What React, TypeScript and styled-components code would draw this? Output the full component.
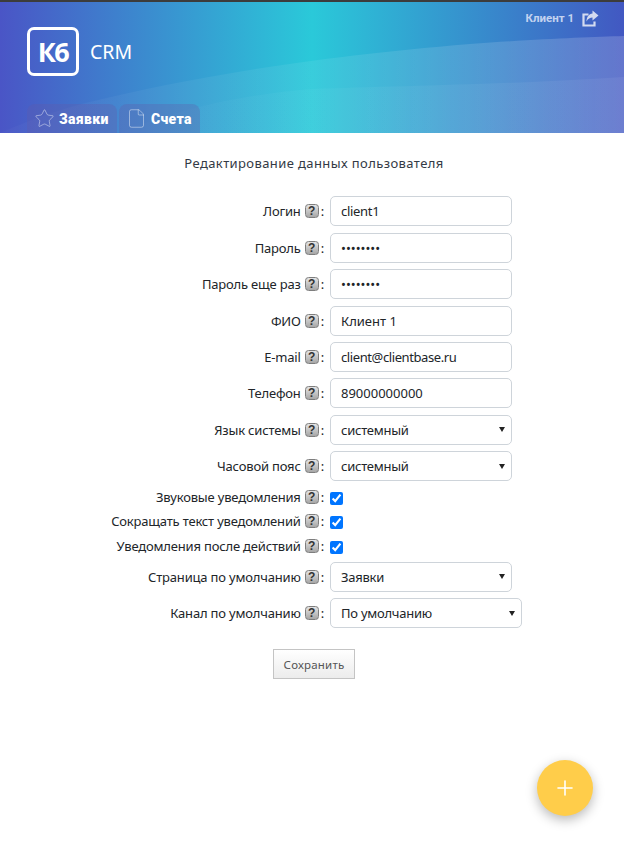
import React from 'react'
import styled, { createGlobalStyle } from 'styled-components'
import { Star, File, Plus } from 'lucide-react'

const GlobalStyle = createGlobalStyle`
  html, body {
    margin: 0;
    padding: 0;
    background: #fff;
    font-family: "Noto Sans", "Open Sans", sans-serif;
    font-size: 13px;
    color: #212529;
  }
`

const Page = styled.div`
  min-height: 866px;
`

const Header = styled.header`
  position: relative;
  height: 131px;
  border-top: 2px solid #3c3c3c;
  overflow: hidden;
  background: linear-gradient(90deg, #4a55c6 0%, #2ac9d9 50%, #4258c2 100%);
`

const Waves = styled.svg`
  position: absolute;
  inset: 0;
  width: 100%;
  height: 100%;
`

const HeaderInner = styled.div`
  position: relative;
  height: 100%;
  display: flex;
  flex-direction: column;
`

const UserBar = styled.div`
  display: flex;
  justify-content: flex-end;
  align-items: center;
  gap: 8px;
  padding: 7px 25px 0 0;
  height: 18px;
  color: #c3d3f0;
  font-family: "Roboto", sans-serif;
  font-size: 11.5px;
  font-weight: 700;
`

const Brand = styled.div`
  display: flex;
  align-items: center;
  gap: 11px;
  margin: 0 0 0 27px;
`

const LogoBox = styled.div`
  width: 46px;
  height: 43px;
  border: 3px solid #fff;
  border-radius: 7px;
  display: flex;
  align-items: center;
  justify-content: center;
  color: #fff;
  font-family: "Open Sans", sans-serif;
  font-size: 27px;
  font-weight: 700;
  letter-spacing: -1.5px;
`

const BrandName = styled.div`
  color: #fff;
  font-size: 19.5px;
`

const Tabs = styled.nav`
  margin-top: auto;
  display: flex;
  gap: 2px;
  padding-left: 27px;
`

const Tab = styled.div<{ $width: number }>`
  width: ${(p) => p.$width}px;
  height: 29px;
  box-sizing: border-box;
  display: flex;
  align-items: center;
  gap: 4px;
  padding-left: 7px;
  border-radius: 8px 8px 0 0;
  background: rgba(100, 90, 170, 0.3);
  color: #fff;
  font-family: "Roboto", sans-serif;
  font-size: 14px;
  font-weight: 900;
  letter-spacing: 0.3px;
  svg {
    color: rgba(255, 255, 255, 0.45);
    flex: none;
  }
`

const Title = styled.h1`
  margin: 21px 0 0;
  padding-left: 4px;
  text-align: center;
  font-size: 13px;
  font-weight: 400;
  line-height: 18px;
  letter-spacing: 0.4px;
  color: #333a45;
`

const Form = styled.form`
  margin-top: 24.4px;
  display: grid;
  grid-template-columns: 325px 1fr;
  column-gap: 5px;
  row-gap: 6.4px;
  align-items: center;
`

const Label = styled.label`
  display: flex;
  justify-content: flex-end;
  align-items: center;
  padding-right: 1px;
  white-space: nowrap;
  letter-spacing: -0.18px;
`

const Help = styled.span`
  flex: none;
  width: 12px;
  height: 12px;
  margin: 0 2px 0 4px;
  border: 1px solid #7e7e7e;
  border-radius: 3.5px;
  background: linear-gradient(#e4e4e4, #a6a6a6);
  color: #333;
  font-family: "Liberation Sans", sans-serif;
  font-size: 12px;
  font-weight: 700;
  line-height: 12px;
  letter-spacing: 0;
  text-align: center;
`

const Field = styled.div<{ $wide?: boolean }>`
  position: relative;
  width: ${(p) => (p.$wide ? 192 : 182)}px;
`

const TextInput = styled.input<{ $tracking?: number }>`
  width: 100%;
  height: 30px;
  box-sizing: border-box;
  padding: 0 10px;
  border: 1px solid #ced4da;
  border-radius: 5px;
  background: #fff;
  color: #212529;
  font: inherit;
  letter-spacing: ${(p) => p.$tracking ?? 0}px;
  outline: none;
`

const Select = styled.select`
  display: block;
  width: 100%;
  height: 30px;
  box-sizing: border-box;
  padding: 0 10px;
  appearance: none;
  border: 1px solid #ced4da;
  border-radius: 5px;
  background: #fff;
  color: #212529;
  font: inherit;
  letter-spacing: -0.25px;
  outline: none;
`

const SelectField = styled(Field)`
  &::after {
    content: '';
    position: absolute;
    top: 12.5px;
    right: 7px;
    border-style: solid;
    border-width: 5px 3px 0;
    border-color: #222 transparent transparent;
    pointer-events: none;
  }
`

const CheckField = styled.div`
  height: 18.4px;
  display: flex;
  align-items: center;
`

const Check = styled.input`
  margin: 3px 0 0;
`

const Actions = styled.div`
  margin-top: 21px;
  display: flex;
  justify-content: center;
  padding-left: 4px;
`

const SaveButton = styled.button`
  width: 82px;
  height: 30px;
  border: 1px solid #c4c4c4;
  background: linear-gradient(#fff, #ececec);
  color: #555;
  font: inherit;
  font-size: 11.5px;
  letter-spacing: 0.2px;
  padding: 0;
`

const Fab = styled.button`
  position: fixed;
  left: 537px;
  top: 760px;
  width: 56px;
  height: 56px;
  border: none;
  border-radius: 50%;
  background: #ffcd4a;
  color: #fff;
  display: flex;
  align-items: center;
  justify-content: center;
  padding: 0;
  box-shadow: 0 4px 12px rgba(0, 0, 0, 0.28);
`

const rows = [
  { label: 'Логин', type: 'text', value: 'client1', tracking: -0.3 },
  { label: 'Пароль', type: 'password', value: '12345678' },
  { label: 'Пароль еще раз', type: 'password', value: '12345678' },
  { label: 'ФИО', type: 'text', value: 'Клиент 1' },
  { label: 'E-mail', type: 'text', value: 'client@clientbase.ru', tracking: -0.4 },
  { label: 'Телефон', type: 'text', value: '89000000000' },
]

const FieldLabel: React.FC<{ text: string }> = ({ text }) => (
  <Label>
    {text}
    <Help>?</Help>:
  </Label>
)

const ShareIcon = () => (
  <svg width="17" height="17" viewBox="0 0 17 17" fill="none">
    <path d="M6.5 4.5H1.5v11h11v-4" stroke="#d3dbf0" strokeWidth="2.2" />
    <path
      d="M10.5 0.5L16.5 5.5L10.5 10.5V7.5C8 7.5 6 8.5 4.5 11.5C4.5 7 7 4 10.5 3.5Z"
      fill="#d3dbf0"
    />
  </svg>
)

const App: React.FC = () => {
  return (
    <Page>
      <GlobalStyle />
      <Header>
        <Waves viewBox="0 0 624 131" preserveAspectRatio="none">
          <defs>
            <linearGradient id="waveTop" x1="0" x2="1" y1="0" y2="0">
              <stop offset="0" stopColor="#fff" stopOpacity="0.02" />
              <stop offset="0.5" stopColor="#fff" stopOpacity="0.07" />
              <stop offset="1" stopColor="#fff" stopOpacity="0.18" />
            </linearGradient>
            <linearGradient id="waveBottom" x1="0" x2="1" y1="0" y2="0">
              <stop offset="0" stopColor="#fff" stopOpacity="0.01" />
              <stop offset="0.5" stopColor="#fff" stopOpacity="0.04" />
              <stop offset="1" stopColor="#fff" stopOpacity="0.06" />
            </linearGradient>
          </defs>
          <path
            d="M0 131 C 30 118, 60 107, 90 100 C 180 78, 300 56, 470 42 C 540 37, 590 35, 624 34 L624 131 Z"
            fill="url(#waveTop)"
          />
          <path
            d="M120 131 C 180 105, 250 92, 312 87 C 400 84, 520 82, 624 75 L624 131 Z"
            fill="url(#waveBottom)"
          />
        </Waves>
        <HeaderInner>
          <UserBar>
            Клиент 1
            <ShareIcon />
          </UserBar>
          <Brand>
            <LogoBox>К6</LogoBox>
            <BrandName>CRM</BrandName>
          </Brand>
          <Tabs>
            <Tab $width={90}>
              <Star size={21} strokeWidth={1.1} />
              Заявки
            </Tab>
            <Tab $width={81}>
              <File size={21} strokeWidth={1.1} />
              Счета
            </Tab>
          </Tabs>
        </HeaderInner>
      </Header>

      <Title>Редактирование данных пользователя</Title>

      <Form>
        {rows.map((row) => (
          <React.Fragment key={row.label}>
            <FieldLabel text={row.label} />
            <Field>
              <TextInput type={row.type} defaultValue={row.value} $tracking={row.tracking} />
            </Field>
          </React.Fragment>
        ))}
        <FieldLabel text="Язык системы" />
        <SelectField>
          <Select defaultValue="системный">
            <option>системный</option>
          </Select>
        </SelectField>
        <FieldLabel text="Часовой пояс" />
        <SelectField>
          <Select defaultValue="системный">
            <option>системный</option>
          </Select>
        </SelectField>
        <FieldLabel text="Звуковые уведомления" />
        <CheckField>
          <Check type="checkbox" defaultChecked />
        </CheckField>
        <FieldLabel text="Сокращать текст уведомлений" />
        <CheckField>
          <Check type="checkbox" defaultChecked />
        </CheckField>
        <FieldLabel text="Уведомления после действий" />
        <CheckField>
          <Check type="checkbox" defaultChecked />
        </CheckField>
        <FieldLabel text="Страница по умолчанию" />
        <SelectField>
          <Select defaultValue="Заявки">
            <option>Заявки</option>
          </Select>
        </SelectField>
        <FieldLabel text="Канал по умолчанию" />
        <SelectField $wide>
          <Select defaultValue="По умолчанию">
            <option>По умолчанию</option>
          </Select>
        </SelectField>
      </Form>

      <Actions>
        <SaveButton type="button">Сохранить</SaveButton>
      </Actions>

      <Fab type="button" aria-label="Добавить">
        <Plus size={24} strokeWidth={1.6} />
      </Fab>
    </Page>
  )
}

export default App
